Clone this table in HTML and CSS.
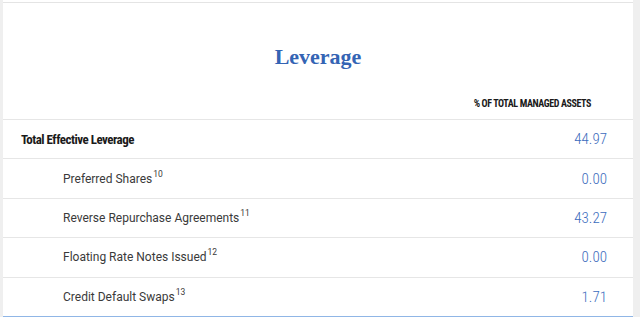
FILE: index.html
```html
<!DOCTYPE html>
<html>
<head>
<meta charset="utf-8">
<link rel="stylesheet" href="styles.css">
</head>
<body>
<div class="page">
  <div class="side side-left"></div>
  <main class="panel">
    <div class="title-block"><h2 class="title">Leverage</h2></div>
    <div class="row head-row"><span class="col-head">% OF TOTAL MANAGED ASSETS</span></div>
    <div class="row total-row"><span class="label-total">Total Effective Leverage</span><span class="value">44.97</span></div>
    <div class="row sub-row"><span class="label">Preferred Shares<sup>10</sup></span><span class="value">0.00</span></div>
    <div class="row sub-row"><span class="label">Reverse Repurchase Agreements<sup>11</sup></span><span class="value">43.27</span></div>
    <div class="row sub-row"><span class="label">Floating Rate Notes Issued<sup>12</sup></span><span class="value">0.00</span></div>
    <div class="row sub-row last"><span class="label">Credit Default Swaps<sup>13</sup></span><span class="value">1.71</span></div>
  </main>
  <div class="side side-right"></div>
</div>
</body>
</html>
```
FILE: styles.css
```css
html, body { margin: 0; padding: 0; background: #fff; }
.page { display: flex; width: 640px; height: 317px; overflow: hidden; }
.side { background: #efefef; flex: none; }
.side-left { width: 3px; }
.side-right { width: 7px; }
.panel { width: 630px; flex: none; padding-top: 2px; display: flex; flex-direction: column; }
.title-block { border-top: 1px solid #e4e4e4; height: 82px; box-sizing: border-box; padding-top: 40px; text-align: center; }
.title { margin: 0; font-family: "Liberation Serif", serif; font-weight: 700; font-size: 22px; line-height: 28px; color: #3464b4; letter-spacing: 0; }
.row { display: flex; align-items: center; justify-content: space-between; border-bottom: 1px solid #e6e6e6; box-sizing: border-box; height: 39.4px; padding-right: 26px; }
.head-row { height: 36px; padding-top: 3px; justify-content: flex-end; padding-right: 42px; }
.col-head { font-family: Roboto, sans-serif; font-weight: 700; font-size: 10px; font-stretch: condensed; color: #1a1a1a; letter-spacing: -0.4px; }
.total-row { padding-left: 18px; }
.label-total { font-family: Roboto, sans-serif; font-weight: 700; font-size: 13px; font-stretch: condensed; color: #1a1a1a; letter-spacing: -0.5px; }
.sub-row { padding-left: 60px; }
.last { border-bottom: 1px solid #90b6e6; }
.label { font-family: Roboto, sans-serif; font-size: 12px; color: #3a3a3a; }
.label sup { font-size: 8.5px; margin-left: 1px; vertical-align: 6px; line-height: 0; }
.value { font-family: Roboto, sans-serif; font-size: 15px; font-weight: 300; font-stretch: condensed; color: #3c6cbd; }
```
